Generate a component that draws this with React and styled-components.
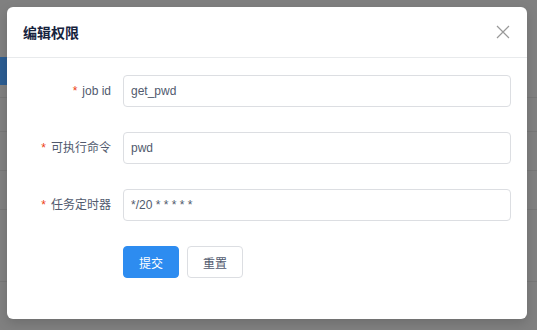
import React, { useState } from "react";
import styled, { createGlobalStyle } from "styled-components";

const GlobalStyle = createGlobalStyle`
  html, body {
    margin: 0;
    padding: 0;
    background: #808080;
  }
  body {
    font-family: "Liberation Sans", Arial, "Noto Sans CJK SC", sans-serif;
    font-size: 12px;
    color: #515a6e;
  }
  * {
    box-sizing: border-box;
  }
`;

const Screen = styled.div`
  position: relative;
  width: 537px;
  height: 330px;
  overflow: hidden;
  background: #808080;
`;

// page underneath the mask, already dimmed
const Underlay = styled.div`
  display: flex;
  flex-direction: column;
  padding-top: 57px;
`;

const UnderRow = styled.div`
  display: flex;
  align-items: flex-start;
  height: ${p => p.$h}px;
  border-bottom: ${p => (p.$line ? "1px solid #777" : "none")};
`;

const UnderButton = styled.div`
  width: 60px;
  height: 28px;
  background: #2c5d92;
`;

const Mask = styled.div`
  position: absolute;
  inset: 0;
  display: flex;
  align-items: flex-start;
  padding: 7px 10px 0 7px;
`;

const Dialog = styled.div`
  width: 520px;
  background: #fff;
  border-radius: 6px;
  box-shadow: 0 4px 12px rgba(0, 0, 0, 0.15);
`;

const Header = styled.div`
  display: flex;
  align-items: center;
  justify-content: space-between;
  height: 51px;
  padding: 0 16px;
  border-bottom: 1px solid #e8eaec;
`;

const Title = styled.div`
  font-size: 14px;
  font-weight: bold;
  color: #17233d;
  font-family: "Noto Sans CJK SC", sans-serif;
`;

const Close = styled.button`
  display: flex;
  align-items: center;
  justify-content: center;
  width: 20px;
  height: 20px;
  margin-right: -2px;
  padding: 0;
  border: none;
  background: none;
  cursor: pointer;
`;

const Body = styled.form`
  padding: 17px 16px 16px;
`;

const Item = styled.div`
  display: flex;
  align-items: center;
  margin-bottom: 25px;
`;

const Label = styled.label`
  width: 100px;
  padding-right: 12px;
  text-align: right;
  line-height: 32px;
  font-size: 12px;
  color: #515a6e;
  font-family: "Liberation Sans", Arial, "Noto Sans CJK SC", sans-serif;
`;

const Star = styled.span`
  color: #ed4014;
  margin-right: 5px;
  font-family: SimSun, "Liberation Sans", sans-serif;
`;

const Input = styled.input`
  flex: 1;
  height: 32px;
  padding: 0 7px;
  border: 1px solid #dcdee2;
  border-radius: 4px;
  font-size: 12px;
  color: #515a6e;
  font-family: "Liberation Sans", Arial, "Noto Sans CJK SC", sans-serif;
  outline: none;
`;

const Buttons = styled.div`
  display: flex;
  gap: 8px;
  margin-left: 100px;
  margin-bottom: 25px;
`;

const Button = styled.button`
  height: 32px;
  padding: 0 15px;
  border-radius: 4px;
  font-size: 12px;
  font-family: "Noto Sans CJK SC", sans-serif;
  border: 1px solid ${p => (p.$primary ? "#2d8cf0" : "#dcdee2")};
  background: ${p => (p.$primary ? "#2d8cf0" : "#fff")};
  color: ${p => (p.$primary ? "#fff" : "#515a6e")};
  cursor: pointer;
`;

const initial = {
  jobId: "get_pwd",
  command: "pwd",
  cron: "*/20 * * * * *",
};

export default function App() {
  const [form, setForm] = useState(initial);
  const set = key => e => setForm({ ...form, [key]: e.target.value });

  return (
    <Screen>
      <GlobalStyle />
      <Underlay>
        <UnderRow $h={41} $line>
          <UnderButton />
        </UnderRow>
        <UnderRow $h={34} $line />
        <UnderRow $h={39} $line />
        <UnderRow $h={39} $line />
        <UnderRow $h={72} $line />
      </Underlay>
      <Mask>
        <Dialog>
          <Header>
            <Title>编辑权限</Title>
            <Close type="button" aria-label="close">
              <svg width="14" height="14" viewBox="0 0 14 14">
                <path
                  d="M1 1 L13 13 M13 1 L1 13"
                  stroke="#999"
                  strokeWidth="1.2"
                  fill="none"
                />
              </svg>
            </Close>
          </Header>
          <Body onSubmit={e => e.preventDefault()}>
            <Item>
              <Label>
                <Star>*</Star>job id
              </Label>
              <Input value={form.jobId} onChange={set("jobId")} />
            </Item>
            <Item>
              <Label>
                <Star>*</Star>可执行命令
              </Label>
              <Input value={form.command} onChange={set("command")} />
            </Item>
            <Item>
              <Label>
                <Star>*</Star>任务定时器
              </Label>
              <Input value={form.cron} onChange={set("cron")} />
            </Item>
            <Buttons>
              <Button type="submit" $primary>
                提交
              </Button>
              <Button type="button" onClick={() => setForm(initial)}>
                重置
              </Button>
            </Buttons>
          </Body>
        </Dialog>
      </Mask>
    </Screen>
  );
}
